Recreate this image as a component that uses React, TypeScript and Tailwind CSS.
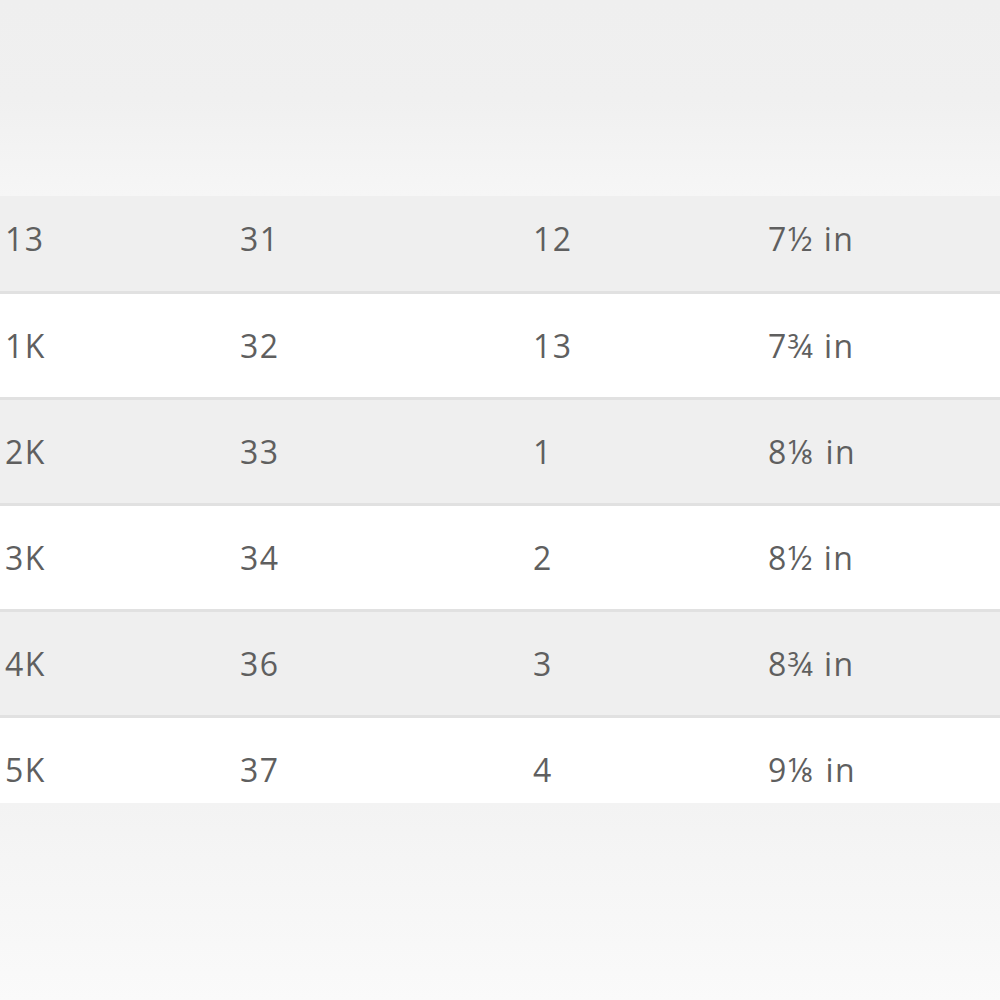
import React from 'react';

const rows: string[][] = [
    ['13', '31', '12', '7½ in'],
    ['1K', '32', '13', '7¾ in'],
    ['2K', '33', '1', '8⅛ in'],
    ['3K', '34', '2', '8½ in'],
    ['4K', '36', '3', '8¾ in'],
    ['5K', '37', '4', '9⅛ in'],
];

const App: React.FC = () => {
    return (
        <div
            className="w-[1000px] h-[1000px] overflow-hidden flex flex-col bg-gradient-to-b from-[#eeeeee] via-[#f4f4f4] to-[#fafafa] text-[#5f5f5f]"
            style={{ fontFamily: '"Open Sans", "DejaVu Sans", sans-serif' }}
        >
            <div className="h-[196px] bg-gradient-to-b from-[#efefef] via-[#f0f0f0] to-[#f6f6f6]" />
            <div className="flex flex-col">
                {rows.map((row, i) => {
                    const first = i === 0;
                    const last = i === rows.length - 1;
                    return (
                        <div
                            key={i}
                            className={`grid grid-cols-[235px_293px_235px_1fr] items-center pl-[5px] text-[32px] leading-none tracking-[1.5px] ${
                                i % 2 === 0 ? 'bg-[#efefef]' : 'bg-white'
                            } ${last ? 'h-[85px] pt-[19px]' : 'border-b-[3px] border-[#e1e1e1]'} ${
                                first ? 'h-[98px] pb-[9px]' : ''
                            } ${!first && !last ? 'h-[106px]' : ''}`}
                        >
                            {row.map((cell, j) => (
                                <div key={j}>{cell}</div>
                            ))}
                        </div>
                    );
                })}
            </div>
            <div className="flex-1 bg-gradient-to-b from-[#f3f3f3] to-[#fafafa]" />
        </div>
    );
};

export default App;
